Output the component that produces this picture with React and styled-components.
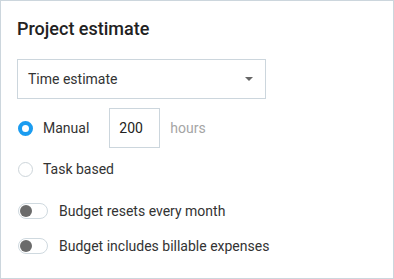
import React, { useState } from "react";
import styled, { createGlobalStyle } from "styled-components";

const Global = createGlobalStyle`
  html, body { margin: 0; padding: 0; background: #fff; }
  body { font-family: Roboto, "Liberation Sans", Arial, sans-serif; color: #333; }
  * { box-sizing: border-box; }
`;

const Card = styled.div`
  width: 394px;
  height: 279px;
  border: 1px solid #ccd6dd;
  padding: 17px 15px 0 16px;
  display: flex;
  flex-direction: column;
`;

const Title = styled.h2`
  margin: 0;
  font-size: 18px;
  line-height: 22px;
  font-weight: 500;
  color: #222;
`;

const Select = styled.div`
  margin-top: 19px;
  width: 249px;
  height: 40px;
  border: 1px solid #ccd6dd;
  display: flex;
  align-items: center;
  justify-content: space-between;
  padding: 0 12px 0 10px;
  font-size: 14px;
  color: #333;
`;

const Caret = styled.span`
  width: 0;
  height: 0;
  border-left: 4px solid transparent;
  border-right: 4px solid transparent;
  border-top: 4px solid #666;
`;

const Row = styled.div`
  display: flex;
  align-items: center;
  margin-top: ${(p) => p.$mt}px;
  height: ${(p) => p.$h}px;
  font-size: 14px;
`;

const Radio = styled.span`
  width: 15px;
  height: 15px;
  border-radius: 50%;
  margin-left: 1px;
  border: ${(p) => (p.$checked ? "4px solid #1b9cf0" : "1px solid #cdd5da")};
  background: #fff;
  flex-shrink: 0;
`;

const Label = styled.span`
  margin-left: ${(p) => p.$ml}px;
  color: #333;
`;

const NumberBox = styled.div`
  width: 51px;
  height: 40px;
  border: 1px solid #ccd6dd;
  margin-left: 20px;
  display: flex;
  align-items: center;
  padding-left: 9px;
  font-size: 14px;
  color: #222;
`;

const Unit = styled.span`
  margin-left: 10px;
  color: #a5a5a5;
`;

const Toggle = styled.span`
  width: 30px;
  height: 16px;
  border-radius: 8px;
  border: 1px solid #cfd9df;
  background: #fff;
  margin-left: 1px;
  display: flex;
  align-items: center;
  padding-left: 1px;
  flex-shrink: 0;
`;

const Knob = styled.span`
  width: 12px;
  height: 12px;
  border-radius: 50%;
  background: #6b6b6b;
`;

export default function App() {
  const [mode] = useState("manual");
  return (
    <>
      <Global />
      <Card>
        <Title>Project estimate</Title>
        <Select>
          <span>Time estimate</span>
          <Caret />
        </Select>
        <Row $mt={9} $h={40}>
          <Radio $checked={mode === "manual"} />
          <Label $ml={10}>Manual</Label>
          <NumberBox>200</NumberBox>
          <Unit>hours</Unit>
        </Row>
        <Row $mt={11} $h={20}>
          <Radio $checked={mode === "task"} />
          <Label $ml={10}>Task based</Label>
        </Row>
        <Row $mt={24} $h={16}>
          <Toggle><Knob /></Toggle>
          <Label $ml={11}>Budget resets every month</Label>
        </Row>
        <Row $mt={19} $h={16}>
          <Toggle><Knob /></Toggle>
          <Label $ml={11}>Budget includes billable expenses</Label>
        </Row>
      </Card>
    </>
  );
}
